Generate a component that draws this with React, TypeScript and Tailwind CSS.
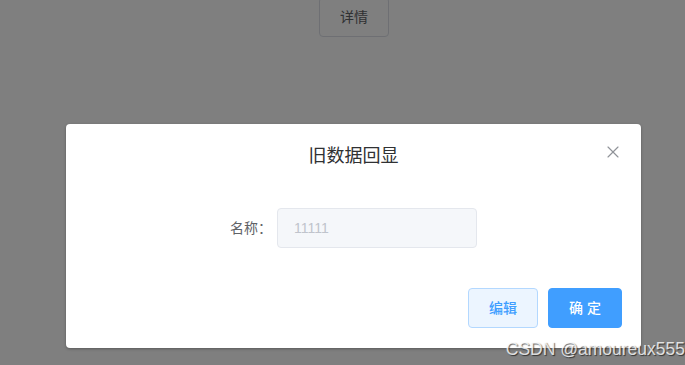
import { X } from "lucide-react";

const font = { fontFamily: '"Liberation Sans", "Noto Sans CJK SC", sans-serif' };

export default function App() {
  return (
    <div className="relative h-[365px] w-[685px] overflow-hidden bg-white" style={font}>
      {/* page underneath */}
      <div className="flex pl-[319px]">
        <button className="-mt-[3px] h-10 w-[70px] rounded border border-[#dcdfe6] bg-white text-sm text-[#606266]">
          详情
        </button>
      </div>

      {/* mask */}
      <div className="absolute inset-0 bg-black/50">
        <div className="ml-[66px] mt-[124px] w-[575px] rounded-sm bg-white shadow-[0_1px_3px_rgba(0,0,0,0.3)]">
          {/* header */}
          <div className="relative h-[54px] px-5 pb-[10px] pt-5 text-center">
            <div className="h-6 text-[18px] leading-6 text-[#303133]">旧数据回显</div>
            <button className="absolute right-5 top-5 flex h-4 w-4 items-center justify-center text-[#909399]">
              <X size={20} strokeWidth={1.4} className="shrink-0" />
            </button>
          </div>

          {/* body */}
          <div className="flex items-center py-[30px] pl-[131px]">
            <label className="w-20 pr-[5px] text-right text-sm text-[#606266]">名称：</label>
            <div className="flex h-10 w-[200px] items-center rounded border border-[#e4e7ed] bg-[#f5f7fa] px-4 text-sm text-[#c0c4cc]">
              11111
            </div>
          </div>

          {/* footer */}
          <div className="flex justify-end gap-[10px] pb-5 pl-5 pr-[19px] pt-[10px]">
            <button className="h-10 w-[70px] rounded border border-[#b3d8ff] bg-[#ecf5ff] text-sm font-medium text-[#409eff]">
              编辑
            </button>
            <button className="h-10 w-[74px] rounded border border-[#409eff] bg-[#409eff] text-sm font-medium text-white">
              确 定
            </button>
          </div>
        </div>
      </div>

      {/* watermark */}
      <div className="absolute bottom-[6px] right-0 text-[17.5px] leading-5 text-white/80 [text-shadow:1px_1px_1px_rgba(0,0,0,0.6)]">
        CSDN @amoureux555
      </div>
    </div>
  );
}
